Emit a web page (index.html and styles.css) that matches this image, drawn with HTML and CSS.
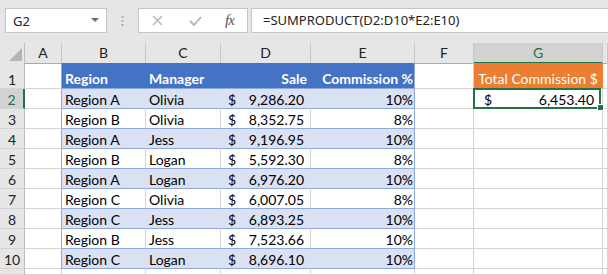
FILE: index.html
```html
<!DOCTYPE html>
<html lang="en">
<head>
  <meta charset="UTF-8">
  <title>Total Commission - SUMPRODUCT</title>
  <link rel="stylesheet" href="styles.css">
</head>
<body>

  <!-- Formula bar -->
  <div class="formula-bar">
    <div class="name-box">
      <span>G2</span>
      <svg class="drop" width="8" height="5" viewBox="0 0 8 5"><path d="M0 0h8L4 4z" fill="#6d6d6d"/></svg>
    </div>
    <svg class="grip" width="3" height="12" viewBox="0 0 3 12">
      <rect x="0.5" y="0" width="2" height="2" fill="#b0b0b0"/>
      <rect x="0.5" y="4" width="2" height="2" fill="#b0b0b0"/>
      <rect x="0.5" y="8" width="2" height="2" fill="#b0b0b0"/>
    </svg>
    <div class="fx-box">
      <svg class="cancel" width="11" height="11" viewBox="0 0 11 11"><path d="M1 1l9 9M10 1l-9 9" stroke="#b3b3b3" stroke-width="1.4"/></svg>
      <svg class="enter" width="13" height="10" viewBox="0 0 13 10"><path d="M1 5l4 4 7-8" stroke="#b3b3b3" stroke-width="1.8" fill="none"/></svg>
      <span class="fx">fx</span>
    </div>
    <div class="formula-input">=SUMPRODUCT(D2:D10*E2:E10)</div>
  </div>

  <!-- Sheet -->
  <div class="sheet">
    <div class="row col-heads">
      <div class="corner"><svg width="13" height="13" viewBox="0 0 13 13"><path d="M13 0v13H0z" fill="#b4b4b4"/></svg></div>
      <div class="ch">A</div>
      <div class="ch">B</div>
      <div class="ch">C</div>
      <div class="ch">D</div>
      <div class="ch">E</div>
      <div class="ch">F</div>
      <div class="ch ch-sel">G</div>
      <div class="ch"></div>
    </div>

    <div class="row row-head">
      <div class="rh">1</div>
      <div class="c before-table"></div>
      <div class="c th">Region</div>
      <div class="c th">Manager</div>
      <div class="c th right">Sale</div>
      <div class="c th right last">Commission %</div>
      <div class="c"></div>
      <div class="c total-head">Total Commission $</div>
      <div class="c"></div>
    </div>

    <div class="row">
      <div class="rh rh-sel">2</div>
      <div class="c before-table"></div>
      <div class="c tb band">Region A</div>
      <div class="c tb band">Olivia</div>
      <div class="c tb band money"><span>$</span><span>9,286.20</span></div>
      <div class="c tb band right last">10%</div>
      <div class="c"></div>
      <div class="c total selected"><span>$</span><span>6,453.40</span></div>
      <div class="c"></div>
    </div>

    <div class="row">
      <div class="rh">3</div>
      <div class="c before-table"></div>
      <div class="c tb">Region B</div>
      <div class="c tb">Olivia</div>
      <div class="c tb money"><span>$</span><span>8,352.75</span></div>
      <div class="c tb right last">8%</div>
      <div class="c"></div>
      <div class="c"></div>
      <div class="c"></div>
    </div>

    <div class="row">
      <div class="rh">4</div>
      <div class="c before-table"></div>
      <div class="c tb band">Region A</div>
      <div class="c tb band">Jess</div>
      <div class="c tb band money"><span>$</span><span>9,196.95</span></div>
      <div class="c tb band right last">10%</div>
      <div class="c"></div>
      <div class="c"></div>
      <div class="c"></div>
    </div>

    <div class="row">
      <div class="rh">5</div>
      <div class="c before-table"></div>
      <div class="c tb">Region B</div>
      <div class="c tb">Logan</div>
      <div class="c tb money"><span>$</span><span>5,592.30</span></div>
      <div class="c tb right last">8%</div>
      <div class="c"></div>
      <div class="c"></div>
      <div class="c"></div>
    </div>

    <div class="row">
      <div class="rh">6</div>
      <div class="c before-table"></div>
      <div class="c tb band">Region A</div>
      <div class="c tb band">Logan</div>
      <div class="c tb band money"><span>$</span><span>6,976.20</span></div>
      <div class="c tb band right last">10%</div>
      <div class="c"></div>
      <div class="c"></div>
      <div class="c"></div>
    </div>

    <div class="row">
      <div class="rh">7</div>
      <div class="c before-table"></div>
      <div class="c tb">Region C</div>
      <div class="c tb">Olivia</div>
      <div class="c tb money"><span>$</span><span>6,007.05</span></div>
      <div class="c tb right last">8%</div>
      <div class="c"></div>
      <div class="c"></div>
      <div class="c"></div>
    </div>

    <div class="row">
      <div class="rh">8</div>
      <div class="c before-table"></div>
      <div class="c tb band">Region C</div>
      <div class="c tb band">Jess</div>
      <div class="c tb band money"><span>$</span><span>6,893.25</span></div>
      <div class="c tb band right last">10%</div>
      <div class="c"></div>
      <div class="c"></div>
      <div class="c"></div>
    </div>

    <div class="row">
      <div class="rh">9</div>
      <div class="c before-table"></div>
      <div class="c tb">Region B</div>
      <div class="c tb">Jess</div>
      <div class="c tb money"><span>$</span><span>7,523.66</span></div>
      <div class="c tb right last">10%</div>
      <div class="c"></div>
      <div class="c"></div>
      <div class="c"></div>
    </div>

    <div class="row">
      <div class="rh">10</div>
      <div class="c before-table"></div>
      <div class="c tb band">Region C</div>
      <div class="c tb band">Logan</div>
      <div class="c tb band money"><span>$</span><span>8,696.10</span></div>
      <div class="c tb band right last">10%</div>
      <div class="c"></div>
      <div class="c"></div>
      <div class="c"></div>
    </div>

    <div class="row row-tail">
      <div class="rh"></div>
      <div class="c"></div>
      <div class="c"></div>
      <div class="c"></div>
      <div class="c"></div>
      <div class="c"></div>
      <div class="c"></div>
      <div class="c"></div>
      <div class="c"></div>
    </div>
  </div>

</body>
</html>
```

FILE: styles.css
```css
body {
  margin: 0;
  width: 608px;
  height: 275px;
  overflow: hidden;
  background: #fff;
  font-family: Lato, "Liberation Sans", sans-serif;
  font-size: 14px;
  color: #000;
}

/* Formula bar */
.formula-bar {
  height: 43px;
  box-sizing: border-box;
  padding-top: 8px;
  background: #e6e6e6;
  display: flex;
  align-items: flex-start;
}
.name-box {
  margin-left: 5px;
  width: 102px;
  height: 25px;
  box-sizing: border-box;
  background: #fff;
  border: 1px solid #c6c6c6;
  display: flex;
  align-items: center;
  justify-content: space-between;
  padding: 0 7px 0 7px;
  font-family: "Noto Sans", sans-serif;
  font-size: 13px;
  color: #222;
}
.grip {
  margin: 8px 14px 0 14px;
}
.fx-box {
  width: 110px;
  height: 25px;
  box-sizing: border-box;
  background: #fff;
  border: 1px solid #c6c6c6;
  display: flex;
  align-items: center;
  padding-left: 13px;
}
.fx-box .enter {
  margin-left: 26px;
}
.fx {
  margin-left: 23px;
  font-family: "Liberation Serif", serif;
  font-style: italic;
  font-size: 15px;
  color: #555;
  letter-spacing: -1px;
}
.formula-input {
  flex: 1;
  margin-left: 3px;
  margin-right: -2px;
  height: 25px;
  box-sizing: border-box;
  background: #fff;
  border: 1px solid #c6c6c6;
  padding-left: 11px;
  line-height: 23px;
  font-family: "Noto Sans", sans-serif;
  font-size: 13px;
  color: #222;
}

/* Sheet grid */
.row {
  display: grid;
  grid-template-columns: 25px 37px 84px 75px 90px 104px 59px 129px 1fr;
  height: 20px;
}
.row-head { height: 26px; }
.row-tail { height: 6px; }

.col-heads {
  background: #e6e6e6;
}
.corner {
  border-right: 1px solid #bdbdbd;
  border-bottom: 1px solid #ababab;
  box-sizing: border-box;
  display: flex;
  align-items: flex-end;
  justify-content: flex-end;
  padding: 0 2px 2px 0;
}
.ch {
  box-sizing: border-box;
  border-right: 1px solid #c6c6c6;
  border-bottom: 1px solid #ababab;
  text-align: center;
  line-height: 19px;
  color: #222;
}
.ch-sel {
  background: #d2d2d2;
  color: #217346;
  border-bottom: 2px solid #217346;
}

.rh {
  background: #e6e6e6;
  box-sizing: border-box;
  border-right: 1px solid #bdbdbd;
  border-bottom: 1px solid #d4d4d4;
  text-align: center;
  display: flex;
  align-items: flex-end;
  justify-content: center;
  line-height: 17px;
  color: #222;
}
.rh-sel {
  background: #d2d2d2;
  color: #217346;
  border-right: 2px solid #217346;
}

.c {
  box-sizing: border-box;
  border-right: 1px solid #d4d4d4;
  border-bottom: 1px solid #d4d4d4;
  display: flex;
  align-items: flex-end;
  line-height: 17px;
  white-space: nowrap;
  position: relative;
}

/* Excel table B1:E10 */
.before-table { border-right-color: #8ea9db; }
.th {
  background: #4472c4;
  color: #fff;
  font-weight: bold;
  padding-left: 3px;
  padding-bottom: 1px;
  border-right-color: #4472c4;
  border-bottom-color: #8ea9db;
}
.tb {
  padding-left: 3px;
  border-bottom-color: #8ea9db;
}
.band {
  background: #d9e1f2;
  border-right-color: #d9e1f2;
}
.right {
  justify-content: flex-end;
  padding-right: 3px;
}
.last {
  border-right-color: #8ea9db;
  padding-right: 1px;
}
.money {
  justify-content: space-between;
  padding-left: 7px;
  padding-right: 6px;
}

/* Result cell */
.total-head {
  background: #ed7d31;
  border-right-color: #ed7d31;
  border-bottom-color: #d4d4d4;
  color: #fff;
  justify-content: center;
  padding-bottom: 1px;
}
.total {
  justify-content: space-between;
  padding-left: 10px;
  padding-right: 8px;
}
.selected::after {
  content: "";
  position: absolute;
  left: -1px;
  top: -1px;
  width: 128px;
  height: 21px;
  border: 2px solid #217346;
  box-sizing: border-box;
}
.selected::before {
  content: "";
  position: absolute;
  right: -2px;
  bottom: -3px;
  width: 5px;
  height: 5px;
  background: #217346;
  border: 1px solid #fff;
  z-index: 2;
}
```
